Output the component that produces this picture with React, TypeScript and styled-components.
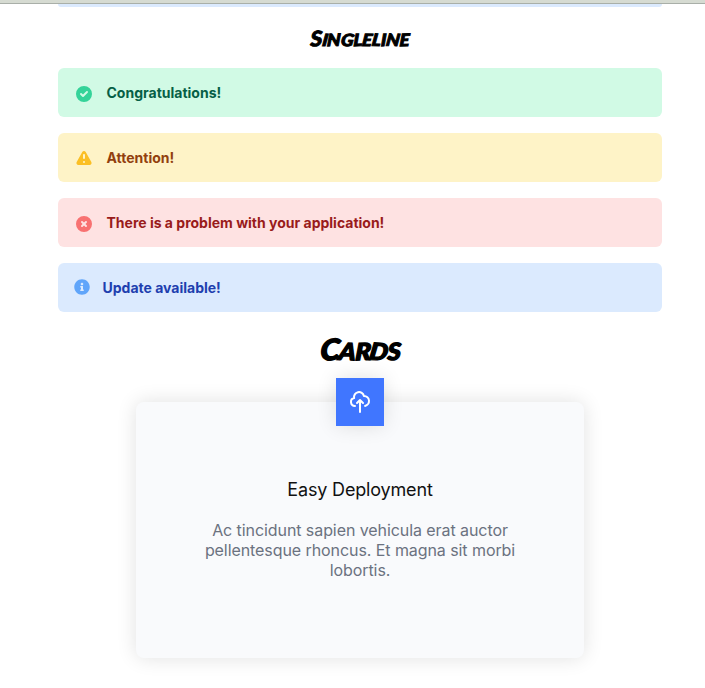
import React from "react";
import styled, { createGlobalStyle } from "styled-components";
import { HiCheckCircle, HiExclamation, HiXCircle, HiOutlineCloudUpload } from "react-icons/hi";
import { FaInfoCircle } from "react-icons/fa";

const GlobalStyle = createGlobalStyle`
  *, *::before, *::after { box-sizing: border-box; }
  body { margin: 0; background: #fff; font-family: Inter, sans-serif; overflow: hidden; }
  h1, h2, h3, p { margin: 0; }
`;

const Page = styled.div`
  height: 688px;
  overflow: hidden;
`;

const TopBar = styled.div`
  height: 4px;
  background: #d6dbd2;
  border-bottom: 1px solid #a9afa8;
`;

const Content = styled.main`
  width: 604px;
  margin-left: 58px;
  display: flex;
  flex-direction: column;
`;

const PreviousAlert = styled.div`
  height: 3px;
  background: #dbeafe;
  border-radius: 0 0 6px 6px;
`;

const MarkerTitle = styled.h2<{ $size: number; $height: number; $spacing: number; $shift: number }>`
  height: ${(p) => p.$height}px;
  padding-top: ${(p) => p.$shift}px;
  display: flex;
  justify-content: center;
  align-items: baseline;
  line-height: ${(p) => p.$height - p.$shift}px;
  font-family: Lato, sans-serif;
  font-size: ${(p) => p.$size}px;
  font-weight: 900;
  font-style: italic;
  letter-spacing: ${(p) => p.$spacing}px;
  text-transform: uppercase;
  white-space: nowrap;
  color: #000;
  -webkit-text-stroke: ${(p) => p.$size * 0.045}px #000;
  transform: scaleX(1.1);
`;

const Letter = styled.span<{ $tilt: number; $initial: boolean }>`
  display: inline-block;
  font-size: ${(p) => (p.$initial ? 1 : 0.81)}em;
  transform: rotate(${(p) => p.$tilt}deg) skewX(-5deg);
`;

const AlertList = styled.section`
  display: flex;
  flex-direction: column;
  gap: 16px;
`;

const Alert = styled.div<{ $bg: string; $fg: string; $icon: string; $compact?: boolean }>`
  height: 49px;
  padding: 0 16px;
  display: flex;
  align-items: center;
  gap: 12.5px;
  border-radius: 6px;
  background: ${(p) => p.$bg};
  color: ${(p) => p.$fg};
  font-size: 14px;
  font-weight: 650;
  line-height: 20px;
  svg {
    flex: none;
    color: ${(p) => p.$icon};
    width: ${(p) => (p.$compact ? 16 : 20)}px;
    height: ${(p) => (p.$compact ? 16 : 20)}px;
    margin-top: ${(p) => (p.$compact ? -2 : 2)}px;
  }
`;

const Card = styled.article`
  width: 448px;
  height: 256px;
  margin: 36px auto 0;
  padding: 0 64px;
  display: flex;
  flex-direction: column;
  align-items: center;
  text-align: center;
  background: #f9fafc;
  border-radius: 8px;
  box-shadow: 0 0 20px rgba(0, 0, 0, 0.12);
`;

const CardIcon = styled.div`
  width: 48px;
  height: 48px;
  margin-top: -24px;
  display: flex;
  align-items: center;
  justify-content: center;
  flex: none;
  color: #fff;
  background: #4076ff;
  box-shadow: 0 0 20px rgba(0, 0, 0, 0.12);
`;

const CardTitle = styled.h3`
  margin-top: 50px;
  font-size: 18px;
  line-height: 28px;
  font-weight: 400;
  letter-spacing: -0.17px;
  color: #111;
`;

const CardText = styled.p`
  margin-top: 16px;
  font-size: 16px;
  line-height: 20px;
  letter-spacing: -0.075px;
  color: #6b7280;
`;

const tilts = [-4, 2, -2, 3, -3, 1, 2, -3, 2, -2];

function Marker({ text, size, height, spacing, shift = 0 }: {
  text: string; size: number; height: number; spacing: number; shift?: number;
}) {
  return (
    <MarkerTitle $size={size} $height={height} $spacing={spacing} $shift={shift}>
      {text.split("").map((c, i) => <Letter key={i} $tilt={tilts[i]} $initial={i === 0}>{c}</Letter>)}
    </MarkerTitle>
  );
}

export default function App() {
  return (
    <Page>
      <GlobalStyle />
      <TopBar />
      <Content>
        <PreviousAlert />
        <Marker text="Singleline" size={21} height={61} spacing={-0.1} shift={0} />
        <AlertList>
          <Alert $bg="#d1fae5" $fg="#065f46" $icon="#34d399"><HiCheckCircle />Congratulations!</Alert>
          <Alert $bg="#fef3c7" $fg="#92400e" $icon="#fbbf24"><HiExclamation />Attention!</Alert>
          <Alert $bg="#fee2e2" $fg="#991b1b" $icon="#f87171"><HiXCircle />There is a problem with your application!</Alert>
          <Alert $bg="#dbeafe" $fg="#1e40af" $icon="#60a5fa" $compact><FaInfoCircle />Update available!</Alert>
        </AlertList>
        <Marker text="Cards" size={29} height={54} spacing={-0.8} shift={20} />
        <Card>
          <CardIcon><HiOutlineCloudUpload size={24} /></CardIcon>
          <CardTitle>Easy Deployment</CardTitle>
          <CardText>Ac tincidunt sapien vehicula erat auctor pellentesque rhoncus. Et magna sit morbi lobortis.</CardText>
        </Card>
      </Content>
    </Page>
  );
}
